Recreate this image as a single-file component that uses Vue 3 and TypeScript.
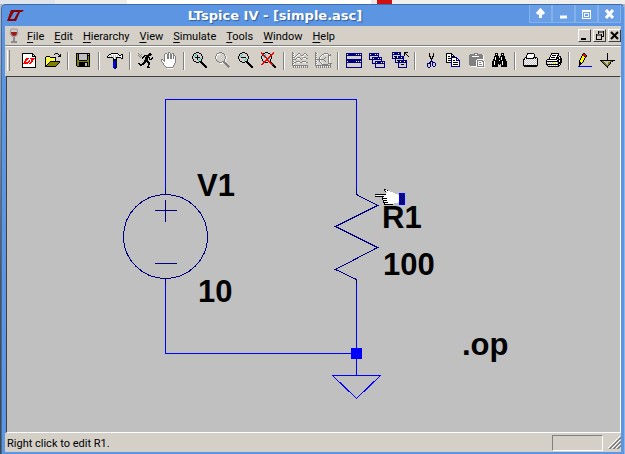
<script setup lang="ts">
interface Run { x: number; y: number; w: number; fill: string }
interface Tool { label: string; art: string[]; disabled?: boolean }

const palette: Record<string, string> = {
  k: '#000000', n: '#000080', g: '#808080', w: '#ffffff', r: '#ff0000', c: '#00e0e0',
  y: '#ffff00', p: '#ffff90', o: '#808000', l: '#c0c0c0', b: '#0000ff', d: '#404000',
}

/* Turns rows of palette letters into horizontal runs of one colour. */
function runs(art: string[]): Run[] {
  const out: Run[] = []
  art.forEach((row, y) => {
    let x = 0
    while (x < row.length) {
      const c = row[x]
      let e = x + 1
      while (e < row.length && row[e] === c) e++
      if (palette[c]) out.push({ x, y, w: e - x, fill: palette[c] })
      x = e
    }
  })
  return out
}

const fresh = [
  '', 'kkkkkkkkkkk', 'kwwwwwwwwwkk', 'kwwwwwwwwwkwk', 'kwwwwwwwwwkkkk', 'kwwwwwwwwwwwwk',
  'kwwwrrrwrrrrrk', 'kwwrrrwwwrrrwk', 'kwwrrwwrwrrwwk', 'kwrrwwrrwrrwwk', 'kwrrrrrwrrwwwk',
  'krrrrrwrrwwwwk', 'kwwwwwwwwwwwwk', 'kwwwwwwwwwwwwk', 'kwwwwwwwwwwwwk', 'kkkkkkkkkkkkkk',
]
const open = [
  '', '..........kkk', '.........k...k.k', '..............kk', '.kkkk........kkk', 'kypypkkkkkk',
  'kpypypypypk', 'kypypypypyk', 'kpypypypypk', 'kypypkkkkkkkkkk', 'kpypkoooooooook', 'kypkoooooooook',
  'kpkoooooooook', 'kkoooooooook', 'kkkkkkkkkkk',
]
const save = [
  '', 'kkkkkkkkkkkkkk', 'kokllllllllklk', 'kokllllllllkkk', 'kokllllllllkok', 'kokllllllllkok',
  'kokllllllllkok', 'kokllllllllkok', 'kookkkkkkkkook', 'kooooooooooook', 'kookkkkkkkkkok', 'kookkkkkkllkok',
  'kookkkkkkllkok', 'kookkkkkkllkok', '.kkkkkkkkkkkkk',
]
const hammer = [
  '', '....kkkkkkk', '..kkwwwwwwwk..kk', '.kwwlwlwlwlwkkwk', 'kwlwlwlwlwlwwwwk', 'kkkkkklwlkkkkkwk',
  '......kwlk....kk', '......kkkk', '......kbnk', '......kbnk', '......bbnk', '......bbnk', '......bbnk',
  '......bbnk', '......bbnk', '......bbnk', '.......nn',
]
const run = [
  '', 'g..........kk', '.g.g......kkkk', 'g.g...kkkkkkk', '.g.g.kk.kkk', '..g.kk.kkkkk..k', '....k..kkk.k.kk',
  '.......kkk.kkk', '......kkkk', '......kkkkk', '.....kkk.kkk', 'kk..kkk...kk', '.kkkkk....kk', '..kk......k',
  '.........kk', '.........kkk',
]
const hand = [
  '.......gg', '....gg.gwg.gg', '...gwwggwggwg', '...gwwggwggwgg', '...gwwggwggwgwg', '...gwwggwggwgwg',
  '...gwwggwggwgwg', 'gg.gwwwwwwwwwwg', 'gwggwwwwwwwwwwg', 'gwwgwwwwwwwwwwg', '.gwwwwwwwwwwwwg', '..gwwwwwwwwwwg',
  '..gwwwwwwwwwwg', '...gwwwwwwwwg', '....gwwwwwwwg', '.....ggggggg', '......wwwwww',
]
const zoomIn = [
  '....kkk', '..kk...kk', '.k..c....k', '.k.c.k...k', 'k.c..k....k', 'k..kkkkk..k', 'k....k..c.k', '.k...k.c.k',
  '.k....c..k', '..kk...kkk', '....kkk.kkk', '.........kkk', '..........kkk', '...........kkk', '............kkk',
  '.............kk',
]
const zoomPan = [
  '....ggg', '..gg...gg', '.gwww....g', '.gw......gw', 'gw........gw', 'gw........gw', 'gw........gw', '.g.......gw',
  '.g.......gw', '..gg...gggw', '....gggwggg', '.....www.ggg', '..........ggg', '...........ggg', '............ggg',
  '.............gw',
]
const zoomOut = [
  '....kkk', '..kk...kk', '.k..c....k', '.k.c.....k', 'k.c.......k', 'k..kkkkk..k', 'k.......c.k', '.k.....c.k',
  '.k....c..k', '..kk...kkk', '....kkk.kkk', '.........kkk', '..........kkk', '...........kkk', '............kkk',
  '.............kk',
]
const zoomFit = [
  'r...kkk.....r', 'rrkk...kk..rr', '.rr.c....krr', '.krrc....rr', 'k.crr...rrk', 'k..crr.rr.k', 'k....rrrc.k',
  '.k...rrc.k', '.k..rrrr.k', '..krr..rrk', '..rrkkk.rrk', '.rr......rrk', 'rr........rrk', '...........kkk',
  '............kkk', '.............kk',
]
const plot = [
  'g', 'ggw...gg....gg', 'gw...gwwg..gwwg', 'ggw.gw...gg....g', 'gw.gw.....ww....', 'gggw.ggg...ggg..', 'gw..gwwwg.gwwwgg',
  'gggg.....g......', 'gw..............', 'ggw.gggg..gggg..', 'gwgg.wwwgg.wwwgg', 'ggw.............', 'gw..............',
  'gggggggggggggggg', '.gwgwgwgwgwgwgwg', '.g.g.g.g.g.g.g.g',
]
const smith = [
  'g', 'ggw......gggg', 'gw.....ggwwwwg.g', 'ggw...gw.....ggg', 'gw...gw......gw', 'ggw.gw....g..gw', 'gw..gw...g...gw',
  'ggggggggg....gw', 'gw..gw...g...gw', 'ggw.gw....g..gw', 'gw...gw......gw', 'ggw...gw.....gggg', 'gw.....gggggg..g',
  'gggggggggggggggg', '.gwgwgwgwgwgwgwg', '.g.g.g.g.g.g.g.g',
]
const tile = [
  '', 'nnnnnnnnnnnnnnnn', 'nwnnnnnnnnwnwnwn', 'nnnnnnnnnnnnnnnn', 'n..............n', 'n..............n', 'n..............n',
  'nnnnnnnnnnnnnnnn', 'nnnnnnnnnnnnnnnn', 'nwnnnnnnnnwnwnwn', 'nnnnnnnnnnnnnnnn', 'n..............n', 'n..............n',
  'n..............n', 'n..............n', 'nnnnnnnnnnnnnnnn',
]
const cascade = [
  '', 'nnnnnnnnnn', 'nwnnnnwnwn', 'nnnnnnnnnn', 'n........n', 'n..nnnnnnnnnn', 'n..nwnnnnwnwn', 'nnnnnnnnnnnnn', '...n........n',
  '...n..nnnnnnnnnn', '...n..nwnnnnwnwn', '...nnnnnnnnnnnnn', '......n........n', '......n........n', '......n........n',
  '......nnnnnnnnnn',
]
const closeAll = [
  'nnnnnnnnn...kkkk', 'nwnnnnwnn...kk', 'nnnnnnnnn...k.k', 'n.......n...k..k', 'n.kkk.nnnnnn....k', 'n..nnwnnnwnn',
  'nnnnnnnnnnnn', '...n.......n', '...n.kkknnnnnnn', '...n..nnwnnnwnn', '...nnnnnnnnnnnn', '......n.......n',
  '......n..kkk..n', '......n.......n', '......n.......n', '......nnnnnnnnn',
]
const cut = [
  '', '......k...k', '......k...k', '......k...k', '......kk.kk', '.......k.k', '.......kkk', '........k', '........k',
  '.......nnn', '......nn.nnn', '....nnnn.n..n', '....n..n.n..n', '....n..n.n..n', '....n..n..nn', '.....nn',
]
const copy = [
  '', 'kkkkkk', 'kwwwwkk', 'kwwwwkwk', 'kwkkwkkkk', 'kwwwwnnnnnn', 'kwkkknwwwwnn', 'kwwwwnwwwwnwn', 'kwkkknwkkwnnnn',
  'kwwwwnwwwwwwwn', 'kkkkknwkkkkkwn', '.....nwwwwwwwn', '.....nwkkkkkwn', '.....nwwwwwwwn', '.....nnnnnnnnn',
]
const paste = [
  '', '.....gggg', '.gggggwwggggg', 'ggggggggggggggw', 'gggwwwwwwwggggw', 'ggggggggggggggw', 'ggggggggggggggw',
  'ggggggggwwwwwww', 'gggggggwggggggw', 'gggggggwgwwwwggw', 'gggggggwgwggwwgw', 'gggggggwgwwwwwgw', 'gggggggwgwgggwgw',
  '.ggggggwgwwwwwgw', '..wwwwwwggggggg', '........wwwwwwww',
]
const find = [
  '', '...kkk...kkk', '...kwk...kwk', '...kkk...kkk', '..kkkkk.kkkkk', '..kwkkk.kwkkk', '..kwkkkkkwkkk', '.kkwkkkkkwkkkk',
  '.kkkkkkwkkkkkk', 'kkwkkkkkkkwkkkk', 'kkwkkkkkkkwkkkk', 'kkwkkkkkkkwkkkk', 'kkwkkk.k.kwkkkk', 'kkkkkk...kkkkkk',
  'kkkkkk...kkkkkk',
]
const setup = [
  '', '....kkkkkkk', '....kwwwwwwk', '...kwwwwwwwk', '...kwwwwwwwk', '..kkwwwwwwkkkk', '.kwkkkkkkkkwkwk', 'kkwlwlwlwlwlwlk',
  'kwlwlwlwlwlwlwk', 'klwlwlwlwlwlwlk', 'kwlwlwlwlwlwlwk', 'klwlwlwlwlwlwlk', 'kwlwlwlwlwlwlwk', 'kkkkkkkkkkkkkkk',
  '.kkkkkkkkkkkkk',
]
const print = [
  '', '.....kkkkkkkk', '.....kwwwwwwk', '....kwkkkkwkk', '....kwwwwwwk.kk', '...kwkkkkwkkkwk', '...kwwwwwwkkkwkk',
  '.kkkkkkkkkkwkkkk', 'kwwwwwwwwwwkkwkk', 'kkkkkkkkkkkkkwkk', 'kwlwlwlyyywlkkkk', 'klwlwlwlwlwlkkk', 'kkkkkkkkkkkkkwk',
  '.kwlwlwlwlwlkk', '..kkkkkkkkkkk',
]
const pencil = [
  '', '......kk', '.....krrk', '.....krrrk', '....kyykrk', '....kyyyk', '...kyyyk', '...kyyyk', '..kyyyk', '..kyyyk',
  '..kkyk', '..kkk', '..kk', '..k', '.bbbbbbbbbbbbbb',
]
const ground = [
  '', '.......k', '.......k', '.......k', '.......k', '.......k', '.......k', '.......k', 'kkkkkkkkkkkkkkk', '.koollllllook',
  '..koolllook', '...koollook', '....koolok', '.....kook', '......kk', '.......k',
]

const groups: Tool[][] = [
  [{ label: 'New Schematic', art: fresh }, { label: 'Open', art: open }],
  [{ label: 'Save', art: save }],
  [{ label: 'Control Panel', art: hammer }],
  [{ label: 'Run', art: run }, { label: 'Halt', art: hand, disabled: true }],
  [{ label: 'Zoom in', art: zoomIn }, { label: 'Pan', art: zoomPan, disabled: true },
    { label: 'Zoom back', art: zoomOut }, { label: 'Zoom full extents', art: zoomFit }],
  [{ label: 'Autorange', art: plot, disabled: true }, { label: 'Pick Visible Traces', art: smith, disabled: true }],
  [{ label: 'Tile Windows', art: tile }, { label: 'Cascade Windows', art: cascade }, { label: 'Close All Windows', art: closeAll }],
  [{ label: 'Cut', art: cut }, { label: 'Copy', art: copy }, { label: 'Paste', art: paste, disabled: true }, { label: 'Find', art: find }],
  [{ label: 'Print Setup', art: setup }, { label: 'Print', art: print }],
  [{ label: 'Draw Wire', art: pencil }, { label: 'Place Ground', art: ground }],
]

const menus = ['File', 'Edit', 'Hierarchy', 'View', 'Simulate', 'Tools', 'Window', 'Help']

const pointer = runs([
  '.........kk', '.........kwwk', '..........kwwww', '............wwwwww', '...........wwwwwwwww',
  'kkkkkkkkkkkwwwwwwwwwwww', '.wwwwwwwwwwwwwwwwwwwwwww', 'kkkkkkkkkwwwwwwwwwwwwwww', '.......kwwwwwwwwwwwwwwww',
  '.......kkkkkwwwwwwwwwwww', '.......kwwwwwwwwwwwwwwww', '........kkkkwwwwwwwwwwww', '........kwwwwwwwwwwwwwww', '........kkkkkwwwwwwwwww',
  '.........kwwwwwwwww', '.........kkkkkkkkk',
])
const cuff = runs(['bbbbbb', 'bkbbkb', 'bbkbkb', 'bkbkbb', 'bbkbkb', 'bkbkbb', 'bbkbkb', 'bkbkbb', 'bbkbkb', 'bkbkbb', 'bbkbkb', 'bbbbbb'])
</script>

<template>
  <div class="desktop">
    <main class="window">
      <header class="titlebar">
        <svg class="logo" width="17" height="11" viewBox="0 0 17 11" aria-hidden="true">
          <path d="M4 0H8L3 9H8L7 11H0ZM8 0H17L15 2H13L9 11H6L11 2H7Z" fill="#8b0000" />
        </svg>
        <h1>LTspice IV - [simple.asc]</h1>
        <div class="frame-buttons">
          <button type="button" aria-label="Shade"><svg width="11" height="12" viewBox="0 0 11 12"><path d="M5.500 2V10M2 6L5.500 2L9 6" /></svg></button>
          <button type="button" aria-label="Minimize"><svg width="11" height="12" viewBox="0 0 11 12"><path d="M2 9H9" /></svg></button>
          <button type="button" aria-label="Maximize"><svg width="11" height="12" viewBox="0 0 11 12" shape-rendering="crispEdges"><path class="thin" d="M1.500 2.500H9.500V10.500H1.500ZM1 3.500H10M3.500 5.500H7.500V8.500H3.500Z" /></svg></button>
          <button type="button" aria-label="Close"><svg width="11" height="12" viewBox="0 0 11 12"><path d="M2 2L9 10M9 2L2 10" /></svg></button>
        </div>
      </header>

      <nav class="menubar">
        <svg class="glass" width="10" height="16" viewBox="0 0 10 16" aria-hidden="true">
          <path d="M2 1H8L9 5Q8 9 5 9Q2 9 1 5Z" fill="#c9c9c9" stroke="#999" />
          <path d="M2 4H8Q8 8 5 8Q2 8 2 4Z" fill="#a01818" />
          <path d="M5 9V14M2 14H8" stroke="#8b8b8b" stroke-width="2" />
        </svg>
        <button v-for="m in menus" :key="m" type="button"><u>{{ m[0] }}</u>{{ m.slice(1) }}</button>
        <div class="doc-buttons">
          <button type="button" aria-label="Minimize document"><svg width="9" height="9"><path d="M1 8H6" stroke-width="2" /></svg></button>
          <button type="button" aria-label="Restore document"><svg width="9" height="9"><path d="M3 1H9M3.500 0V3M8.500 0V6M6 5.500H9M1 4H7M1.500 3V8.500M6.500 3V8.500M1 8.500H7" /></svg></button>
          <button type="button" aria-label="Close document"><svg width="9" height="9"><path d="M1 1L8 8M8 1L1 8" stroke-width="2" /></svg></button>
        </div>
      </nav>

      <div class="toolbar" role="toolbar">
        <i class="grip"></i>
        <div v-for="(group, gi) in groups" :key="gi" class="group">
          <button v-for="t in group" :key="t.label" type="button" :aria-label="t.label" :disabled="t.disabled">
            <svg width="17" height="18" shape-rendering="crispEdges">
              <rect v-for="(r, i) in runs(t.art)" :key="i" :x="r.x" :y="r.y" :width="r.w" height="1" :fill="r.fill" />
            </svg>
          </button>
        </div>
      </div>

      <section class="canvas">
        <svg width="100%" height="100%" role="img" aria-label="Schematic">
          <g transform="translate(-7 -77)">
            <g fill="none" stroke="#0000ff" shape-rendering="crispEdges">
              <path d="M165.500 190V99.500H356.500V190M356.500 280V375M165.500 284V353.500H356.500" />
              <path d="M332.500 375.500H380.500L356.500 398.500Z" />
              <rect x="351" y="348" width="11" height="11" fill="#0000ff" stroke="none" />
            </g>
            <g fill="none" stroke="#000080" shape-rendering="crispEdges">
              <circle cx="165.500" cy="236.500" r="42" />
              <path d="M165.500 189V194M165.500 279V284M155 210.500H177M165.500 200V222M155 263.500H177" />
              <path d="M356.500 189V194.500L377.500 205.500L335.500 226.500L377.500 247.500L335.500 269.500L356.500 279.500V284" />
            </g>
            <g class="labels">
              <text x="197" y="196">V1</text>
              <text x="198" y="302">10</text>
              <text x="382" y="228">R1</text>
              <text x="383" y="275">100</text>
              <text x="462" y="355">.op</text>
            </g>
            <g transform="translate(399 193)" shape-rendering="crispEdges">
              <rect v-for="(r, i) in cuff" :key="i" :x="r.x" :y="r.y" :width="r.w" height="1" :fill="r.fill" />
            </g>
            <g transform="translate(375 189)" shape-rendering="crispEdges">
              <rect v-for="(r, i) in pointer" :key="i" :x="r.x" :y="r.y" :width="r.w" height="1" :fill="r.fill" />
            </g>
          </g>
        </svg>
      </section>

      <footer class="statusbar">
        <span>Right click to edit R1.</span>
        <i class="pane"></i>
        <svg width="13" height="13" shape-rendering="crispEdges" aria-hidden="true">
          <path d="M0 12L12 0M4 12L12 4M8 12L12 8" stroke="#ffffff" />
          <path d="M1 13L13 1M2 13L13 2M5 13L13 5M6 13L13 6M9 13L13 9M10 13L13 10" stroke="#808080" />
        </svg>
      </footer>
    </main>
  </div>
</template>

<style>
body {
  margin: 0;
}
</style>

<style scoped>
.desktop {
  box-sizing: border-box;
  display: flex;
  min-height: 100vh;
  padding: 4px 0 0 1px;
  background:
    linear-gradient(90deg, #dfe3ec 0 55px, #ececea 55px 127px, #ffffff 127px 371px, #e8e8e8 371px 377px, #d01010 377px 392px, #eeeeec 392px) top / 100% 4px no-repeat,
    linear-gradient(#b8bcc4, #55544c 60%, #44443c);
}

.window {
  flex: 1;
  min-width: 0;
  display: flex;
  flex-direction: column;
  box-sizing: border-box;
  padding: 0 3px 2px;
  border: 1px solid #3b6cae;
  border-bottom-width: 0;
  border-right-color: #8fb6ea;
  border-radius: 5px 5px 0 0;
  background: #5c96e2;
  font-family: Roboto, "Noto Sans", sans-serif;
  font-size: 11px;
  color: #000000;
}

button {
  margin: 0;
  padding: 0;
  border: 0;
  background: none;
  font: inherit;
  color: inherit;
}

svg {
  display: block;
}

.titlebar {
  display: flex;
  align-items: center;
  height: 21px;
}

.logo {
  margin-left: 2px;
}

h1 {
  flex: 1;
  margin: 0;
  padding-right: 3px;
  font: bold 13px/20px "DejaVu Sans", sans-serif;
  text-align: center;
  color: #ffffff;
  text-shadow: 1px 1px 1px #2f5c9c;
}

.frame-buttons {
  display: flex;
  align-self: flex-start;
}

.frame-buttons button {
  display: grid;
  place-items: center;
  box-sizing: border-box;
  width: 23px;
  height: 18px;
  border: 1px solid #84b0ec;
  border-top: 0;
  background: #6a9fe5;
}

.frame-buttons path {
  fill: none;
  stroke: #ffffff;
  stroke-width: 3;
}

.frame-buttons .thin {
  stroke-width: 1;
}

.menubar {
  display: flex;
  align-items: center;
  height: 19px;
  background: #d4d0c8;
  border-bottom: 1px solid #808080;
}

.glass {
  margin: 0 3px 0 4px;
}

.menubar > button {
  padding: 3px 5px 0;
  line-height: 16px;
}

u {
  text-underline-offset: 2px;
}

.doc-buttons {
  display: flex;
  gap: 2px;
  margin-left: auto;
}

.doc-buttons button {
  width: 13px;
  height: 13px;
  box-sizing: border-box;
  padding: 1px;
  background: #d4d0c8;
  border: 1px solid;
  border-color: #ffffff #404040 #404040 #ffffff;
}

.doc-buttons path {
  fill: none;
  stroke: #000000;
}

.toolbar {
  display: flex;
  align-items: center;
  height: 27px;
  padding-bottom: 2px;
  border-top: 1px solid #ffffff;
  background: #d4d0c8;
}

.grip {
  width: 1px;
  height: 21px;
  margin: 0 8px 0 2px;
  border-left: 1px solid #ffffff;
  border-right: 1px solid #808080;
  flex: none;
}

.group {
  display: flex;
  flex: none;
}

.group + .group::before {
  content: "";
  width: 0;
  height: 18px;
  margin: 0 3px;
  border-left: 1px solid #808080;
  border-right: 1px solid #ffffff;
  align-self: center;
}

.group button {
  padding: 3px 2px 2px 4px;
}

.canvas {
  flex: 1;
  min-height: 200px;
  border: 1px solid #ffffff;
  border-top-color: #404040;
  border-left-color: #404040;
  margin-left: 1px;
  background: #c0c0c0;
  overflow: hidden;
}

.canvas svg {
  height: 100%;
}

.labels {
  font: bold 31px "Liberation Sans", sans-serif;
  fill: #000000;
}

.statusbar {
  display: flex;
  align-items: center;
  height: 19px;
  background: #d4d0c8;
}

.statusbar span {
  flex: 1;
  padding: 2px 0 0 2px;
  line-height: 15px;
}

.pane {
  width: 49px;
  height: 14px;
  margin-right: 5px;
  border: 1px solid #ffffff;
  border-top-color: #808080;
  border-left-color: #808080;
}
</style>
